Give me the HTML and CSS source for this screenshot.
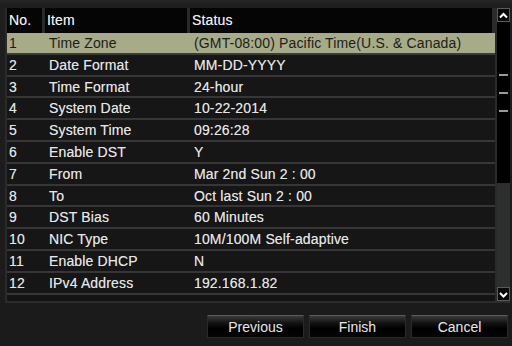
FILE: index.html
```html
<!DOCTYPE html>
<html lang="en">
<head>
  <meta charset="UTF-8">
  <title>Summary</title>
  <link rel="stylesheet" href="styles.css">
</head>
<body>
  <div class="screen">
    <div class="list-box">
      <div class="grid">
        <div class="head">No.</div>
        <div class="head">Item</div>
        <div class="head">Status</div>

        <div class="row selected"><span>1</span><span>Time Zone</span><span>(GMT-08:00) Pacific Time(U.S. &amp; Canada)</span></div>
        <div class="row"><span>2</span><span>Date Format</span><span>MM-DD-YYYY</span></div>
        <div class="row"><span>3</span><span>Time Format</span><span>24-hour</span></div>
        <div class="row"><span>4</span><span>System Date</span><span>10-22-2014</span></div>
        <div class="row"><span>5</span><span>System Time</span><span>09:26:28</span></div>
        <div class="row"><span>6</span><span>Enable DST</span><span>Y</span></div>
        <div class="row"><span>7</span><span>From</span><span>Mar 2nd Sun 2 : 00</span></div>
        <div class="row"><span>8</span><span>To</span><span>Oct last Sun 2 : 00</span></div>
        <div class="row"><span>9</span><span>DST Bias</span><span>60 Minutes</span></div>
        <div class="row"><span>10</span><span>NIC Type</span><span>10M/100M Self-adaptive</span></div>
        <div class="row"><span>11</span><span>Enable DHCP</span><span>N</span></div>
        <div class="row"><span>12</span><span>IPv4 Address</span><span>192.168.1.82</span></div>
      </div>

      <!-- scrollbar -->
      <div class="scrollbar">
        <div class="arrow">
          <svg width="11" height="11" viewBox="0 0 11 11"><path d="M2 7.5 L5.5 4 L9 7.5" stroke="#fff" stroke-width="2" fill="none"/></svg>
        </div>
        <div class="thumb">
          <i class="tick" style="top: 52px"></i>
          <i class="tick" style="top: 70px"></i>
          <i class="tick" style="top: 88px"></i>
        </div>
        <div class="track"></div>
        <div class="arrow">
          <svg width="11" height="11" viewBox="0 0 11 11"><path d="M2 4 L5.5 7.5 L9 4" stroke="#fff" stroke-width="2" fill="none"/></svg>
        </div>
      </div>
    </div>

    <div class="buttons">
      <button type="button">Previous</button>
      <button type="button">Finish</button>
      <button type="button">Cancel</button>
    </div>
  </div>
</body>
</html>
```

FILE: styles.css
```css
/* Reset */
body {
  margin: 0;
  padding: 0;
  background-color: #1c1c1c;
  font-family: 'Liberation Sans', Arial, sans-serif;
  font-size: 14px;
  color: #e6e6e6;
}
.screen {
  width: 512px;
  height: 346px;
  box-sizing: border-box;
  padding: 8px 2px 0 5px;
  background: linear-gradient(#262626, #1e1e1e 6px, #1b1b1b);
}
.list-box {
  display: flex;
  height: 293px;
  padding-left: 2px;
  background-color: #2a2a2a;
  border-bottom: 2px solid #2c2c2c;
}
.grid {
  flex: 1;
  display: grid;
  grid-template-columns: 38px 145px 1fr;
  grid-template-rows: 25px repeat(12, 21.8px);
  align-content: start;
  background-color: #141414;
  letter-spacing: 0.15px;
  text-shadow: 0 0 0.6px rgba(255, 255, 255, 0.5);
}
.head {
  background-color: #050505;
  border-right: 3px solid #2a2a2a;
  padding-left: 2px;
  line-height: 25px;
  color: #f0f0f0;
}
.head:last-of-type {
  border-right: none;
}
.row {
  display: contents;
}
.row span {
  display: block;
  padding-left: 2px;
  line-height: 20px;
  border-bottom: 2px solid #363636;
  background-color: #161616;
  white-space: nowrap;
}
.row span + span {
  padding-left: 4px;
}
.row.selected span {
  background-color: #a7ab87;
  color: #1c1c1c;
  text-shadow: none;
  border-bottom-color: #3b3b3b;
}
.scrollbar {
  width: 13px;
  margin-left: 2px;
  display: flex;
  flex-direction: column;
  background-color: #2d2e2e;
}
.arrow {
  height: 14px;
  box-sizing: border-box;
  border: 1px solid #5a5a5a;
  background-color: #080808;
  display: flex;
  align-items: center;
  justify-content: center;
}
.thumb {
  position: relative;
  height: 161px;
  background-color: #000;
}
.tick {
  position: absolute;
  left: 2px;
  width: 9px;
  height: 2px;
  background-color: #9a9a9a;
}
.track {
  flex: 1;
}
.buttons {
  display: flex;
  justify-content: flex-end;
  gap: 5px;
  margin-top: 12px;
  padding-right: 2px;
}
button {
  width: 97px;
  height: 23px;
  padding: 0;
  font-family: 'Liberation Sans', Arial, sans-serif;
  font-size: 14px;
  color: #e8e8e8;
  background: linear-gradient(#3a3a3a, #111 35%, #000 60%, #050505);
  border: 1px solid #2a2a2a;
  border-top-color: #5a5a5a;
}
```
